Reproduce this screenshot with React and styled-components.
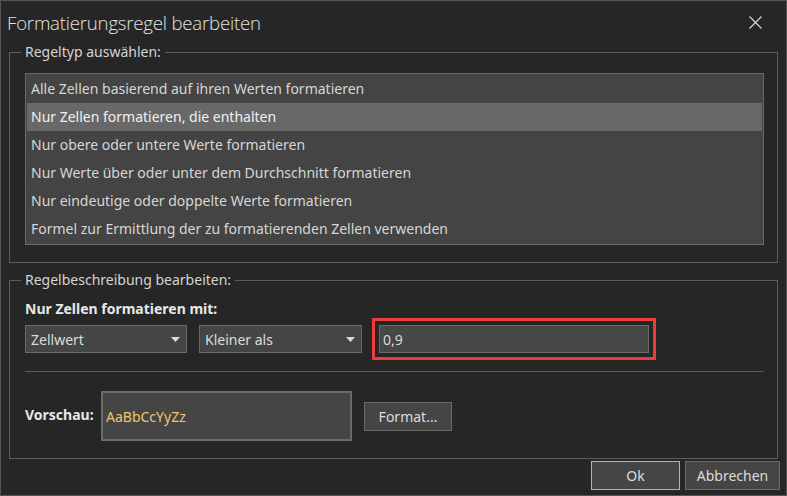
import React from "react";
import styled, { createGlobalStyle } from "styled-components";

const Global = createGlobalStyle`
  * { box-sizing: border-box; }
  html, body { margin: 0; padding: 0; background: #262626; }
  body { font-family: "Noto Sans", "Open Sans", sans-serif; }
`;

const Window = styled.div`
  width: 787px;
  height: 496px;
  border: 1px solid #555555;
  background: #262626;
  display: flex;
  flex-direction: column;
  color: #dcdcdc;
  font-size: 14px;
`;

const TitleBar = styled.div`
  height: 42px;
  display: flex;
  align-items: center;
  justify-content: space-between;
  padding: 0 24px 0 6px;
`;

const Title = styled.div`
  font-family: "Open Sans", "Noto Sans", sans-serif;
  font-weight: 300;
  font-size: 18.6px;
  color: #e4e4e4;
  letter-spacing: -0.2px;
`;

const Close = styled.button`
  all: unset;
  width: 13px;
  height: 13px;
  display: flex;
  align-items: center;
  justify-content: center;
`;

const Group = styled.fieldset`
  margin: ${(p) => p.$top || 0}px 8px 0 8px;
  padding: ${(p) => p.$pt}px 13px ${(p) => p.$pb}px 15px;
  border: 1px solid #5c5c5c;
  min-width: 0;
`;

const Legend = styled.legend`
  padding: 0 4px;
  margin-left: -4px;
  line-height: 18px;
  color: #d4d4d4;
  font-size: 14px;
`;

const List = styled.div`
  background: #444444;
  border: 1px solid #6a6a6a;
  padding: 1px 1px 1px 1px;
  display: flex;
  flex-direction: column;
`;

const Row = styled.div`
  height: 28px;
  line-height: 28px;
  padding-left: 4px;
  color: ${(p) => (p.$selected ? "#f0f0f0" : "#d6d6d6")};
  background: ${(p) => (p.$selected ? "#686868" : "transparent")};
  white-space: nowrap;
`;

const Heading = styled.div`
  font-weight: bold;
  color: #e8e8e8;
  line-height: 18px;
`;

const Controls = styled.div`
  display: flex;
  align-items: center;
  margin-top: 7px;
`;

const Select = styled.div`
  width: ${(p) => p.$w}px;
  height: 28px;
  margin-right: ${(p) => p.$mr}px;
  background: #454545;
  border: 1px solid #6a6a6a;
  display: flex;
  align-items: center;
  justify-content: space-between;
  padding: 0 6px 0 5px;
  color: #dcdcdc;
`;

const Input = styled.div`
  width: 270px;
  height: 28px;
  background: #474747;
  border: 1px solid #6a6a6a;
  outline: 3px solid #ee3b3b;
  outline-offset: 4px;
  display: flex;
  align-items: center;
  padding-left: 3px;
  color: #dcdcdc;
`;

const Separator = styled.div`
  height: 1px;
  background: #5c5c5c;
  margin: 18px 0 0 0;
`;

const PreviewRow = styled.div`
  display: flex;
  align-items: center;
  margin-top: 19px;
`;

const Label = styled.div`
  font-weight: bold;
  color: #e8e8e8;
  width: 76px;
  margin-top: -4px;
`;

const Preview = styled.div`
  width: 251px;
  height: 50px;
  background: #454545;
  border: 2px solid #6a6a6a;
  display: flex;
  align-items: center;
  padding-left: 3px;
  color: #efc66b;
`;

const Button = styled.button`
  all: unset;
  box-sizing: border-box;
  width: ${(p) => p.$w}px;
  height: 29px;
  background: #454545;
  border: 1px solid ${(p) => (p.$default ? "#b4b4b4" : "#6a6a6a")};
  color: #dcdcdc;
  font-family: "Noto Sans", "Open Sans", sans-serif;
  font-size: 14px;
  display: flex;
  align-items: center;
  justify-content: center;
`;

const FormatButton = styled(Button)`
  margin-left: 12px;
`;

const Footer = styled.div`
  display: flex;
  justify-content: flex-end;
  gap: 5px;
  margin: 2px 6px 0 0;
`;

const Arrow = () => (
  <svg width="9" height="5" viewBox="0 0 9 5">
    <path d="M0 0 H9 L4.5 5 Z" fill="#dcdcdc" />
  </svg>
);

const items = [
  "Alle Zellen basierend auf ihren Werten formatieren",
  "Nur Zellen formatieren, die enthalten",
  "Nur obere oder untere Werte formatieren",
  "Nur Werte über oder unter dem Durchschnitt formatieren",
  "Nur eindeutige oder doppelte Werte formatieren",
  "Formel zur Ermittlung der zu formatierenden Zellen verwenden",
];

export default function App() {
  return (
    <>
      <Global />
      <Window>
        <TitleBar>
          <Title>Formatierungsregel bearbeiten</Title>
          <Close aria-label="Schließen">
            <svg width="13" height="13" viewBox="0 0 13 13">
              <path d="M0.5 0.5 L12.5 12.5 M12.5 0.5 L0.5 12.5" stroke="#dcdcdc" strokeWidth="1.1" />
            </svg>
          </Close>
        </TitleBar>
        <Group $pt={12} $pb={17}>
          <Legend>Regeltyp auswählen:</Legend>
          <List>
            {items.map((t, i) => (
              <Row key={t} $selected={i === 1}>
                {t}
              </Row>
            ))}
          </List>
        </Group>
        <Group $top={8} $pt={11} $pb={17}>
          <Legend>Regelbeschreibung bearbeiten:</Legend>
          <Heading>Nur Zellen formatieren mit:</Heading>
          <Controls>
            <Select $w={162} $mr={12}>
              <span>Zellwert</span>
              <Arrow />
            </Select>
            <Select $w={163} $mr={17}>
              <span>Kleiner als</span>
              <Arrow />
            </Select>
            <Input>0,9</Input>
          </Controls>
          <Separator />
          <PreviewRow>
            <Label>Vorschau:</Label>
            <Preview>AaBbCcYyZz</Preview>
            <FormatButton $w={88}>Format...</FormatButton>
          </PreviewRow>
        </Group>
        <Footer>
          <Button $w={89} $default>Ok</Button>
          <Button $w={95}>Abbrechen</Button>
        </Footer>
      </Window>
    </>
  );
}
